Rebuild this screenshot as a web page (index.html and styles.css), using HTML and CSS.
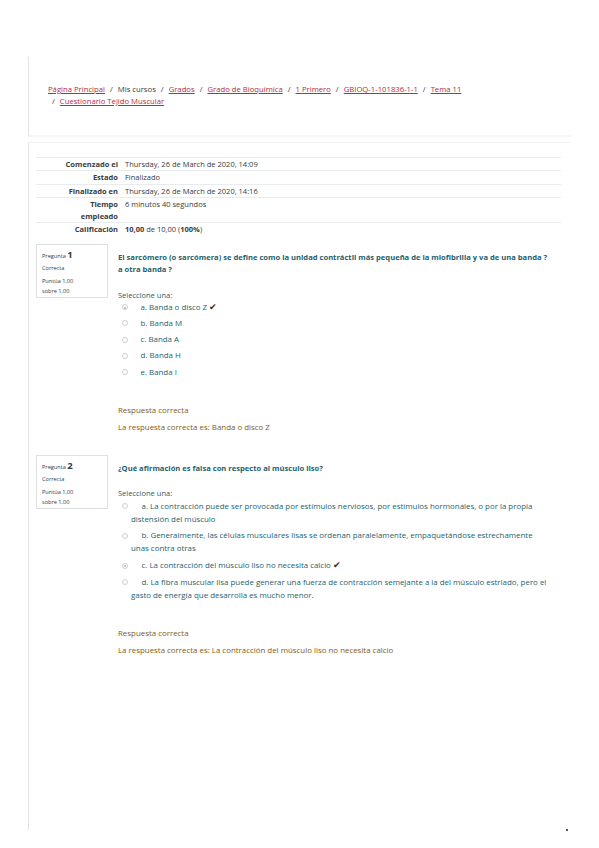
FILE: index.html
```html
<!DOCTYPE html>
<html lang="es">
<head>
<meta charset="utf-8">
<title>Cuestionario Tejido Muscular</title>
<link rel="stylesheet" href="styles.css">
</head>
<body>
<header class="page-header">
  <nav class="breadcrumb">
    <a href="#">Página Principal</a><span class="sep">/</span><span class="plain">Mis cursos</span><span class="sep">/</span><a href="#">Grados</a><span class="sep">/</span><a href="#">Grado de Bioquímica</a><span class="sep">/</span><a href="#">1 Primero</a><span class="sep">/</span><a href="#">GBIOQ-1-101836-1-1</a><span class="sep">/</span><a href="#">Tema 11</a><br><span class="sep first">/</span><a href="#">Cuestionario Tejido Muscular</a>
  </nav>
</header>
<main class="content">
  <table class="summary">
    <tr><th>Comenzado el</th><td>Thursday, 26 de March de 2020, 14:09</td></tr>
    <tr><th>Estado</th><td>Finalizado</td></tr>
    <tr><th>Finalizado en</th><td>Thursday, 26 de March de 2020, 14:16</td></tr>
    <tr><th>Tiempo empleado</th><td>6 minutos 40 segundos</td></tr>
    <tr><th>Calificación</th><td><b>10,00</b> de 10,00 (<b>100%</b>)</td></tr>
  </table>

  <section class="que q1">
    <div class="info">
      <div class="qno">Pregunta <b>1</b></div>
      <div class="state">Correcta</div>
      <div class="grade">Puntúa 1,00 sobre 1,00</div>
    </div>
    <div class="qbody">
      <p class="qtext">El sarcómero (o sarcómera) se define como la unidad contráctil más pequeña de la miofibrilla y va de una banda ? a otra banda ?</p>
      <p class="prompt">Seleccione una:</p>
      <div class="answers">
        <div class="opt"><span class="radio checked"></span>a. Banda o disco Z <span class="tick">✔</span></div>
        <div class="opt"><span class="radio"></span>b. Banda M</div>
        <div class="opt"><span class="radio"></span>c. Banda A</div>
        <div class="opt"><span class="radio"></span>d. Banda H</div>
        <div class="opt"><span class="radio"></span>e. Banda I</div>
      </div>
      <div class="feedback">
        <p>Respuesta correcta</p>
        <p>La respuesta correcta es: Banda o disco Z</p>
      </div>
    </div>
  </section>

  <section class="que q2">
    <div class="info">
      <div class="qno">Pregunta <b>2</b></div>
      <div class="state">Correcta</div>
      <div class="grade">Puntúa 1,00 sobre 1,00</div>
    </div>
    <div class="qbody">
      <p class="qtext">¿Qué afirmación es falsa con respecto al músculo liso?</p>
      <p class="prompt">Seleccione una:</p>
      <div class="answers long">
        <div class="opt"><span class="radio"></span>a. La contracción puede ser provocada por estímulos nerviosos, por estímulos hormonales, o por la propia distensión del músculo</div>
        <div class="opt"><span class="radio"></span>b. Generalmente, las células musculares lisas se ordenan paralelamente, empaquetándose estrechamente unas contra otras</div>
        <div class="opt"><span class="radio checked"></span>c. La contracción del músculo liso no necesita calcio <span class="tick">✔</span></div>
        <div class="opt"><span class="radio"></span>d. La fibra muscular lisa puede generar una fuerza de contracción semejante a la del músculo estriado, pero el gasto de energía que desarrolla es mucho menor.</div>
      </div>
      <div class="feedback">
        <p>Respuesta correcta</p>
        <p>La respuesta correcta es: La contracción del músculo liso no necesita calcio</p>
      </div>
    </div>
  </section>
</main>
<div class="dot"></div>
</body>
</html>
```

FILE: styles.css
```css
html, body {
  margin: 0;
  padding: 0;
  background: #fff;
}
body {
  font-family: "Open Sans", "Noto Sans", sans-serif;
  font-size: 7.5px;
  color: #373a3c;
  width: 599px;
  height: 848px;
  position: relative;
}
p { margin: 0; }

.page-header {
  margin: 57px 28px 0 28px;
  height: 80px;
  border-left: 1px solid #e3e3e3;
  border-bottom: 2px solid #f7f7f7;
  box-sizing: border-box;
  padding: 26px 0 0 19px;
}
.breadcrumb {
  line-height: 12px;
  font-size: 7.7px;
}
.breadcrumb a {
  color: #b82a45;
  text-decoration: underline;
}
.breadcrumb .sep {
  margin: 0 5px;
  color: #373a3c;
}
.breadcrumb .sep.first { margin-left: 4px; }

.content {
  margin: 5px 28px 0 28px;
  height: 688px;
  border-left: 1px solid #e3e3e3;
  border-top: 1px solid #f2f2f2;
  box-sizing: border-box;
  padding: 14px 10px 0 7px;
}

.summary {
  width: 525px;
  border-collapse: collapse;
}
.summary th, .summary td {
  border-top: 1px solid #e8ecef;
  padding: 0;
  line-height: 12.3px;
  vertical-align: top;
}
.summary th {
  width: 88px;
  text-align: right;
  padding: 0 6px 0 26px;
  font-weight: 700;
  color: #373a3c;
  box-sizing: border-box;
}
.summary td { padding-left: 1px; }

.que {
  display: flex;
  align-items: flex-start;
}
.q1 { margin-top: 8px; }
.q2 { margin-top: 17px; }

.info {
  width: 72px;
  height: 54px;
  box-sizing: border-box;
  border: 1px solid #dee2e6;
  background: #fff;
  padding: 5px 5px 0 5px;
  font-size: 5.6px;
  line-height: 9px;
  color: #373a3c;
}
.info .qno { margin-bottom: 3px; }
.info .qno b { font-size: 9.5px; line-height: 9px; font-weight: 700; }
.info .state { margin-bottom: 3px; }
.info .grade { width: 34px; line-height: 10px; }

.qbody {
  margin-left: 10px;
  width: 433px;
}
.qtext {
  font-weight: 700;
  font-size: 7.6px;
  color: #1d5f6e;
  line-height: 12px;
  margin-top: 7px;
}
.prompt {
  color: #1d5f6e;
  margin-top: 15px;
  line-height: 11px;
}
.q2 .prompt { margin-top: 14px; }
.answers { margin-top: 0; }
.opt {
  color: #1d5f6e;
  font-size: 7.9px;
  padding-left: 13px;
  line-height: 13px;
  margin-bottom: 3.2px;
}
.long .opt { margin-bottom: 3.8px; }
.long { margin-top: 1px; }
.radio {
  display: inline-block;
  width: 6px;
  height: 6px;
  border: 0.6px solid #d0d0d0;
  border-radius: 50%;
  margin-left: -9px;
  margin-right: 12.5px;
  position: relative;
  vertical-align: -0.5px;
  box-sizing: border-box;
}
.radio.checked::after {
  content: "";
  position: absolute;
  left: 1.3px;
  top: 1.3px;
  width: 2.2px;
  height: 2.2px;
  border-radius: 50%;
  background: #b0b0b0;
}
.long .radio { margin-right: 13.5px; }
.tick { color: #2b2b2b; font-size: 8.5px; line-height: 1; }

.feedback {
  margin-top: 25px;
  color: #7f5b20;
  font-size: 7.9px;
}
.feedback p { line-height: 12px; margin-bottom: 5px; }

.dot {
  position: absolute;
  left: 566px;
  top: 829px;
  width: 2px;
  height: 2px;
  background: #555;
}
```
